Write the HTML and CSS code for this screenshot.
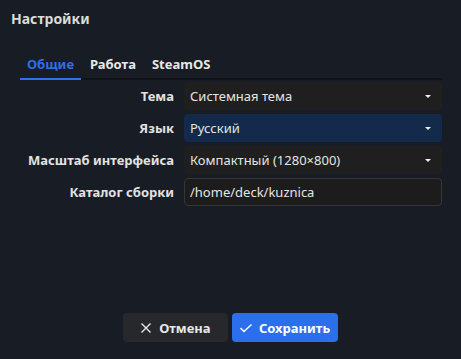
FILE: index.html
```html
<!DOCTYPE html>
<html lang="ru">
<head>
<meta charset="utf-8">
<title>Настройки</title>
<link rel="stylesheet" href="styles.css">
</head>
<body>
<div class="dialog">
  <h1 class="title">Настройки</h1>
  <div class="tabs">
    <div class="tab active">Общие</div>
    <div class="tab">Работа</div>
    <div class="tab">SteamOS</div>
  </div>
  <div class="form">
    <label class="label">Тема</label>
    <div class="select"><span>Системная тема</span><span class="caret"></span></div>
    <label class="label">Язык</label>
    <div class="select focused"><span>Русский</span><span class="caret"></span></div>
    <label class="label">Масштаб интерфейса</label>
    <div class="select"><span>Компактный (1280×800)</span><span class="caret"></span></div>
    <label class="label">Каталог сборки</label>
    <div class="input">/home/deck/kuznica</div>
  </div>
  <div class="footer">
    <button class="btn cancel">
      <svg width="12" height="12" viewBox="0 0 12 12"><path d="M1.5 1.5 L10.5 10.5 M10.5 1.5 L1.5 10.5" stroke="#e8e8e8" stroke-width="1.4" fill="none"/></svg>
      <span>Отмена</span>
    </button>
    <button class="btn save">
      <svg width="12" height="12" viewBox="0 0 12 12"><path d="M0.5 6 L4 9.5 L11.5 2.5" stroke="#ffffff" stroke-width="1.4" fill="none"/></svg>
      <span>Сохранить</span>
    </button>
  </div>
</div>
</body>
</html>
```
FILE: styles.css
```css
html, body {
  margin: 0;
  padding: 0;
  height: 100%;
}
body {
  background: #181c24;
  font-family: "Noto Sans", "DejaVu Sans", sans-serif;
  color: #e4e4e4;
}
.dialog {
  height: 100vh;
  display: flex;
  flex-direction: column;
  box-sizing: border-box;
}
.title {
  margin: 9px 0 0 11px;
  font-size: 14px;
  line-height: 19px;
  font-weight: 700;
  color: #dcdcdc;
}
.tabs {
  margin: 27px 19px 0 20px;
  display: flex;
  gap: 2px;
  border-bottom: 2px solid #0f1217;
}
.tab {
  padding: 0 7px 5px;
  font-size: 13px;
  line-height: 18px;
  font-weight: 700;
  color: #e8e8e8;
  margin-bottom: -2px;
  border-bottom: 2px solid transparent;
}
.tab.active {
  color: #2f6fe8;
  border-bottom-color: #2f6ff0;
}
.form {
  margin: 2px 19px 0 20px;
  display: grid;
  grid-template-columns: 154px 1fr;
  column-gap: 10px;
  row-gap: 4px;
  align-items: center;
}
.label {
  text-align: right;
  font-size: 13px;
  font-weight: 700;
  color: #e2e2e2;
}
.select, .input {
  height: 28px;
  box-sizing: border-box;
  border-radius: 4px;
  background: #1f1f1f;
  display: flex;
  align-items: center;
  justify-content: space-between;
  padding: 0 11px 0 6px;
  font-size: 13px;
  color: #e4e4e4;
}
.select.focused {
  background: #132a4a;
}
.input {
  background: #1c1c1c;
  border: 1px solid #373737;
  padding-left: 5px;
}
.caret {
  width: 0;
  height: 0;
  border-left: 3.5px solid transparent;
  border-right: 3.5px solid transparent;
  border-top: 3.5px solid #f0f0f0;
}
.footer {
  margin-top: auto;
  padding-bottom: 17px;
  display: flex;
  justify-content: center;
  gap: 4px;
}
.btn {
  min-width: 105px;
  height: 29px;
  border: none;
  border-radius: 4px;
  display: flex;
  align-items: center;
  justify-content: center;
  gap: 7px;
  padding: 0 8px;
  font-family: "Noto Sans", "DejaVu Sans", sans-serif;
  font-size: 13px;
  font-weight: 700;
  color: #e8e8e8;
}
.btn.cancel {
  background: #27282c;
}
.btn.save {
  background: #2c6fec;
  color: #ffffff;
}
```
